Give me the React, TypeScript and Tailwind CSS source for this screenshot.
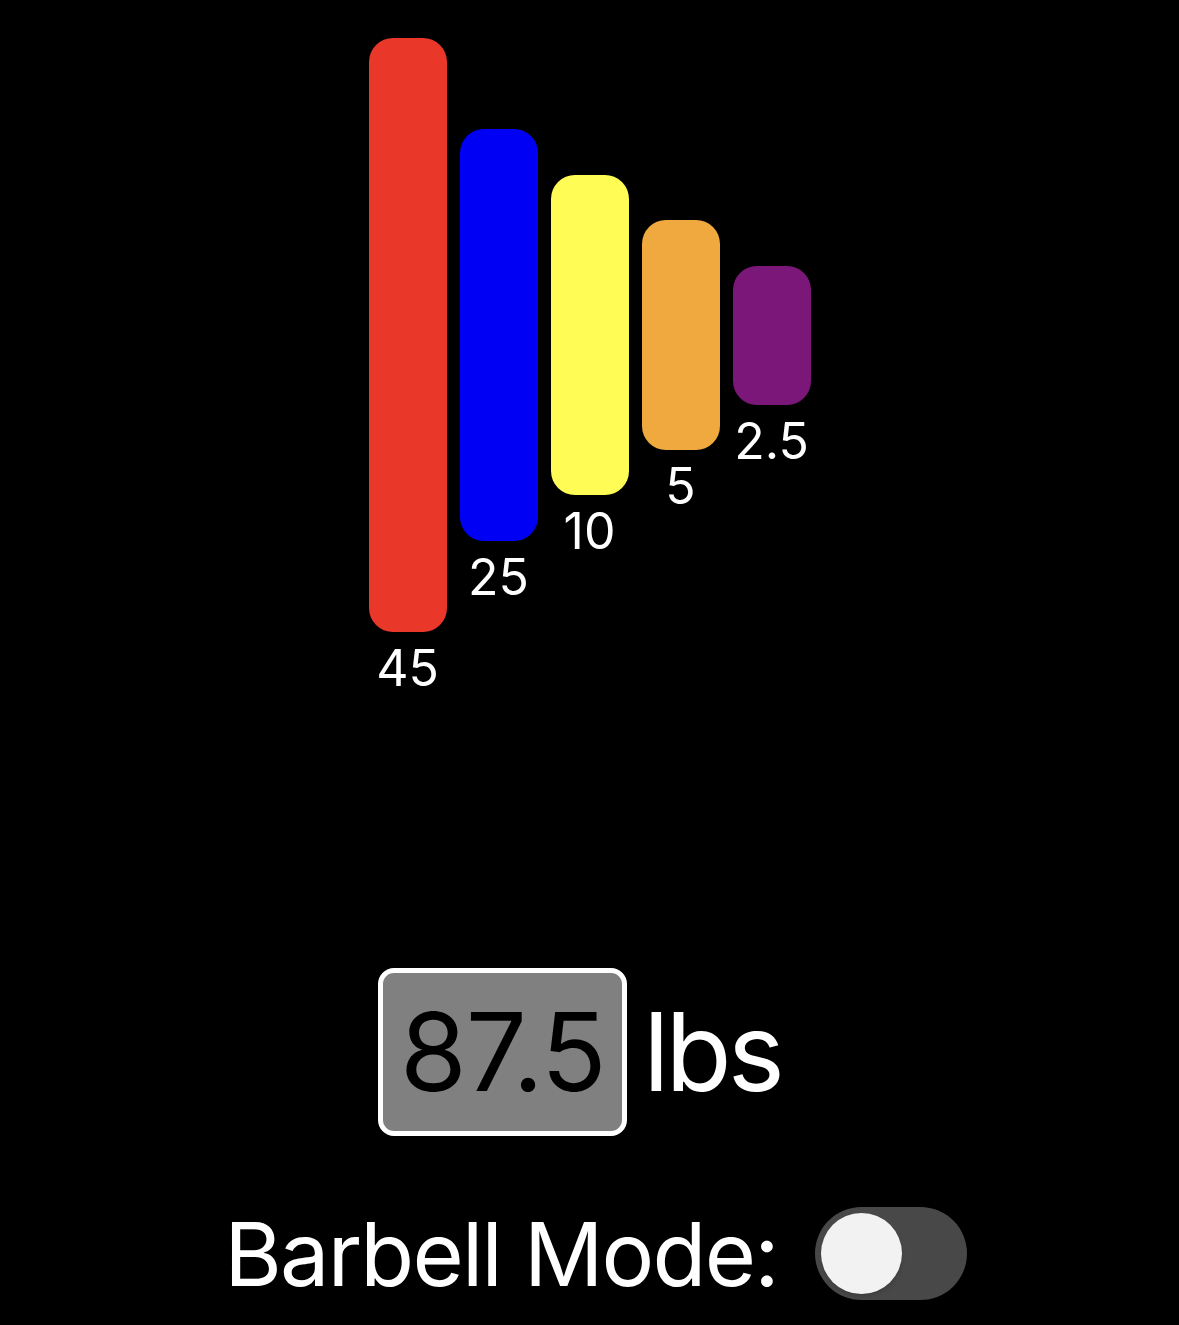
import React, { useState } from 'react';

const plates = [
  { label: '45', height: 594, color: 'bg-[#e9372a]' },
  { label: '25', height: 412, color: 'bg-[#0000f5]' },
  { label: '10', height: 320, color: 'bg-[#fefc55]' },
  { label: '5', height: 230, color: 'bg-[#f0a93f]' },
  { label: '2.5', height: 139, color: 'bg-[#7a1778]' },
];

function Plate({ label, height, color }: { label: string; height: number; color: string }) {
  return (
    <div className="flex flex-col items-center">
      {/* spacer so the bar itself stays centred in the row */}
      <div className="h-[55px]" />
      <div className="rounded-[30px] border-[6px] border-black">
        <div className={`w-[78px] rounded-[24px] ${color}`} style={{ height }} />
      </div>
      <div className="mt-[5px] h-[50px] text-[50px] leading-none text-white">{label}</div>
    </div>
  );
}

export default function App() {
  const [barbell, setBarbell] = useState(false);

  return (
    <div className="flex h-[1325px] w-full flex-col items-center bg-black font-['Inter',sans-serif] text-white">
      <div className="flex h-[670px] items-center gap-[1px]">
        {plates.map(p => (
          <Plate key={p.label} {...p} />
        ))}
      </div>

      <div className="mt-[298px] flex items-center gap-[16px] pr-[20px]">
        <div className="flex h-[168px] w-[249px] items-center justify-center rounded-[16px] border-[5px] border-white bg-[#808080]">
          <span className="text-[108px] leading-none font-normal tracking-[-1px] text-black">87.5</span>
        </div>
        <span className="text-[108px] leading-none tracking-[-4px]">lbs</span>
      </div>

      <div className="mt-[71px] flex items-center gap-[37px] pl-[12px]">
        <span className="text-[88px] leading-none tracking-[-1.8px]">Barbell Mode:</span>
        <button
          onClick={() => setBarbell(!barbell)}
          className={`flex h-[93px] w-[152px] items-center rounded-full p-[6px] ${barbell ? 'justify-end bg-[#34c759]' : 'justify-start bg-[#484848]'}`}
        >
          <div className="h-[81px] w-[81px] rounded-full bg-[#f2f2f2] shadow-md" />
        </button>
      </div>
    </div>
  );
}
